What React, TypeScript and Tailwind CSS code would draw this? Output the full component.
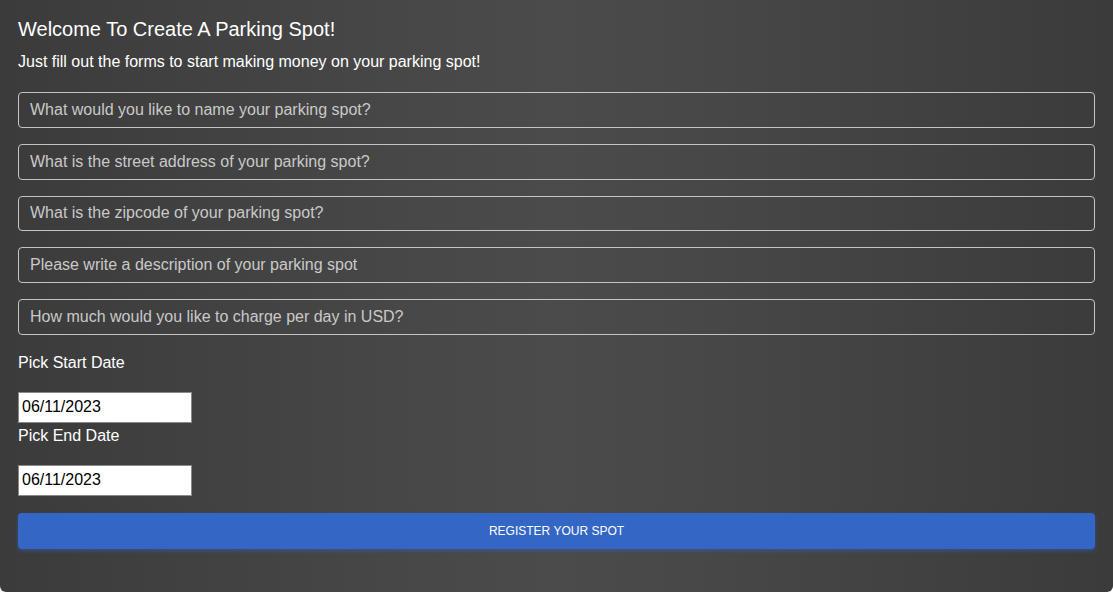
import React from "react";

const fields = [
  "What would you like to name your parking spot?",
  "What is the street address of your parking spot?",
  "What is the zipcode of your parking spot?",
  "Please write a description of your parking spot",
  "How much would you like to charge per day in USD?",
];

export default function App() {
  return (
    <div className="w-[1113px] h-[592px] bg-white overflow-hidden">
      <div
        className="h-full w-full rounded-b-[6px] bg-[linear-gradient(to_right,#3b3b3b_0%,#474747_35%,#4b4b4b_50%,#474747_65%,#3b3b3b_100%)] px-[18px] pt-[15px] text-white"
        style={{ fontFamily: '"Liberation Sans", Arial, sans-serif' }}
      >
        <h1 className="text-[20px] leading-[28px] font-normal">Welcome To Create A Parking Spot!</h1>
        <p className="mt-[8px] text-[16px] leading-[22px]">
          Just fill out the forms to start making money on your parking spot!
        </p>
        <div className="mt-[19px] flex flex-col gap-[16px]">
          {fields.map((f) => (
            <input
              key={f}
              type="text"
              placeholder={f}
              className="h-[35.75px] w-full rounded-[4px] border border-[#c4c4c4] bg-transparent px-[11px] text-[16px] text-white placeholder:text-[#c9c9c9] outline-none"
            />
          ))}
        </div>
        <div className="mt-[19px] text-[16px] leading-[18px]">Pick Start Date</div>
        <input
          type="text"
          defaultValue="06/11/2023"
          className="mt-[20px] block h-[31px] w-[174px] border border-[#8a8a8a] bg-white px-[3px] text-[16px] text-black outline-none"
        />
        <div className="mt-[4px] text-[16px] leading-[18px]">Pick End Date</div>
        <input
          type="text"
          defaultValue="06/11/2023"
          className="mt-[20px] block h-[31px] w-[174px] border border-[#8a8a8a] bg-white px-[3px] text-[16px] text-black outline-none"
        />
        <button className="mt-[17px] flex h-[36px] w-full items-center justify-center rounded-[4px] bg-[#3366c5] pt-[1px] text-[12px] uppercase text-white shadow-[0_2px_4px_rgba(51,102,197,0.45)]">
          Register your spot
        </button>
      </div>
    </div>
  );
}
